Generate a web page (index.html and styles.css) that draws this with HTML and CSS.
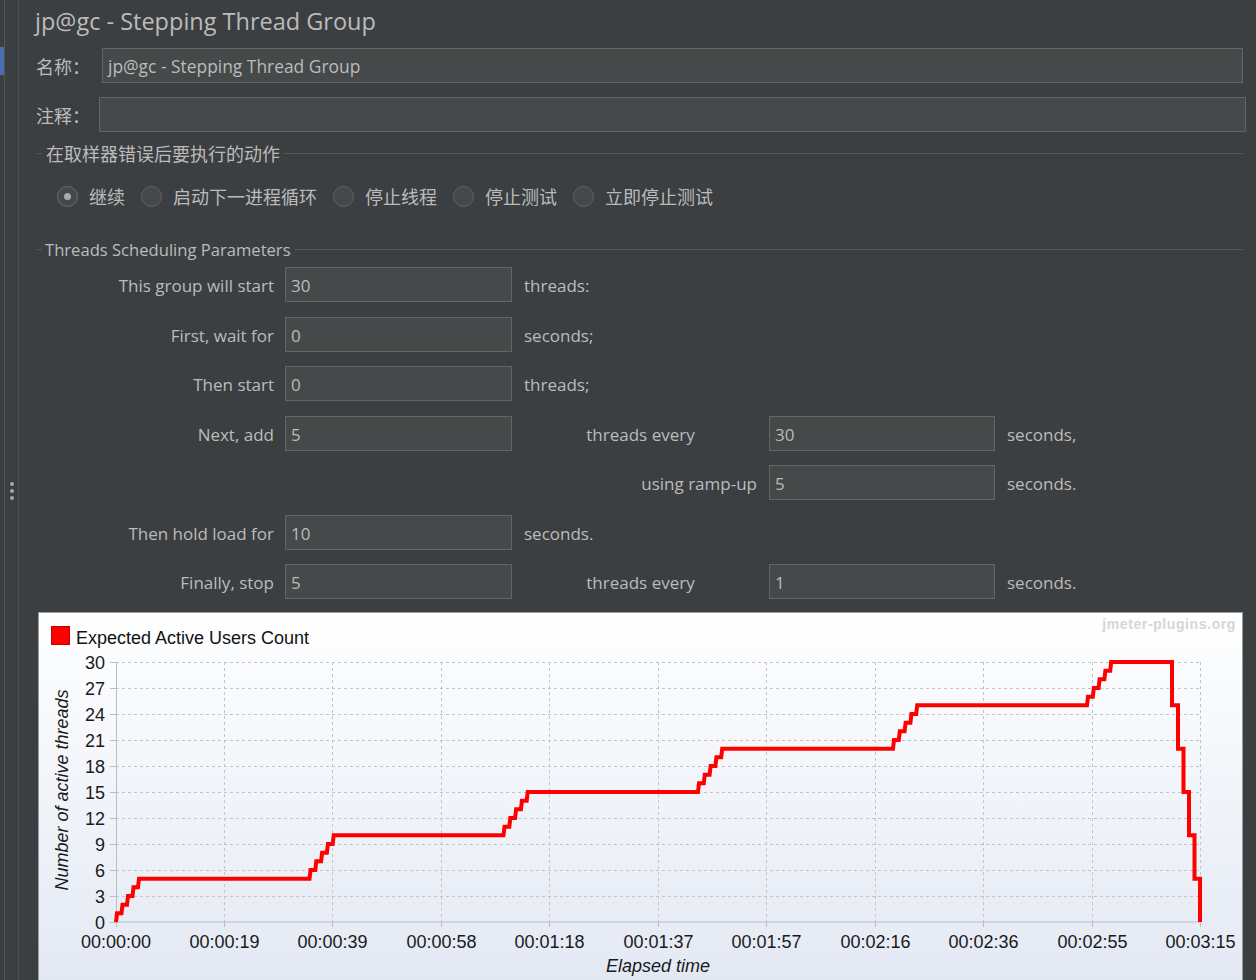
FILE: index.html
```html
<!DOCTYPE html>
<html lang="zh-CN">
<head>
<meta charset="utf-8">
<title>jp@gc - Stepping Thread Group</title>
<link rel="stylesheet" href="styles.css">
</head>
<body>
<div class="app">
  <div class="rail">
    <div class="rail-a"><div class="rail-mark"></div></div>
    <div class="rail-b"><div class="dots"><i></i><i></i><i></i></div></div>
  </div>
  <main class="panel">
    <h1 class="title">jp@gc - Stepping Thread Group</h1>
    <div class="field name-field">
      <span class="lbl cjk">名称：</span>
      <div class="input name-input">jp@gc - Stepping Thread Group</div>
    </div>
    <div class="field comment-field">
      <span class="lbl cjk">注释：</span>
      <div class="input"></div>
    </div>

    <section class="group">
      <div class="group-head"><span class="lead"></span><span class="group-title cjk">在取样器错误后要执行的动作</span><span class="rule"></span></div>
      <div class="radios">
        <span class="radio on"></span><span class="rlabel cjk">继续</span>
        <span class="radio"></span><span class="rlabel cjk">启动下一进程循环</span>
        <span class="radio"></span><span class="rlabel cjk">停止线程</span>
        <span class="radio"></span><span class="rlabel cjk">停止测试</span>
        <span class="radio"></span><span class="rlabel cjk">立即停止测试</span>
      </div>
    </section>

    <section class="group group-sched">
      <div class="group-head"><span class="lead"></span><span class="group-title latin">Threads Scheduling Parameters</span><span class="rule"></span></div>
      <div class="sched">
        <span class="lab">This group will start</span><div class="input">30</div><span class="unit wide">threads:</span>
        <span class="lab">First, wait for</span><div class="input">0</div><span class="unit wide">seconds;</span>
        <span class="lab">Then start</span><div class="input">0</div><span class="unit wide">threads;</span>
        <span class="lab">Next, add</span><div class="input">5</div><span class="mid">threads every</span><div class="input">30</div><span class="unit">seconds,</span>
        <span class="mid-r">using ramp-up</span><div class="input">5</div><span class="unit">seconds.</span>
        <span class="lab">Then hold load for</span><div class="input">10</div><span class="unit wide">seconds.</span>
        <span class="lab">Finally, stop</span><div class="input">5</div><span class="mid">threads every</span><div class="input">1</div><span class="unit">seconds.</span>
      </div>
    </section>

    <div class="chart">
      <svg width="1203" height="378" viewBox="39 613 1203 378" xmlns="http://www.w3.org/2000/svg">
        <text class="wm" x="1236" y="629">jmeter-plugins.org</text>
        <rect x="51.5" y="626.5" width="18" height="18" fill="#ff0000" stroke="#c40000"/>
        <text class="ct" x="76" y="644">Expected Active Users Count</text>

        <g class="grid">
          <line x1="116" y1="662.5" x2="1201" y2="662.5"/>
          <line x1="116" y1="688.5" x2="1201" y2="688.5"/>
          <line x1="116" y1="714.5" x2="1201" y2="714.5"/>
          <line x1="116" y1="740.5" x2="1201" y2="740.5"/>
          <line x1="116" y1="766.5" x2="1201" y2="766.5"/>
          <line x1="116" y1="792.5" x2="1201" y2="792.5"/>
          <line x1="116" y1="818.5" x2="1201" y2="818.5"/>
          <line x1="116" y1="844.5" x2="1201" y2="844.5"/>
          <line x1="116" y1="870.5" x2="1201" y2="870.5"/>
          <line x1="116" y1="896.5" x2="1201" y2="896.5"/>
          <line x1="224.5" y1="662" x2="224.5" y2="922"/>
          <line x1="332.5" y1="662" x2="332.5" y2="922"/>
          <line x1="441.5" y1="662" x2="441.5" y2="922"/>
          <line x1="549.5" y1="662" x2="549.5" y2="922"/>
          <line x1="658.5" y1="662" x2="658.5" y2="922"/>
          <line x1="766.5" y1="662" x2="766.5" y2="922"/>
          <line x1="875.5" y1="662" x2="875.5" y2="922"/>
          <line x1="983.5" y1="662" x2="983.5" y2="922"/>
          <line x1="1092.5" y1="662" x2="1092.5" y2="922"/>
          <line x1="1200.5" y1="662" x2="1200.5" y2="922"/>
        </g>

        <g class="axis">
          <line x1="116.5" y1="662" x2="116.5" y2="922"/>
          <line x1="116" y1="922" x2="1201" y2="922" stroke-width="2"/>
          <path d="M110,662.5H116M110,688.5H116M110,714.5H116M110,740.5H116M110,766.5H116M110,792.5H116M110,818.5H116M110,844.5H116M110,870.5H116M110,896.5H116M110,922.5H116"/>
          <path d="M116.5,922V927M224.5,922V927M332.5,922V927M441.5,922V927M549.5,922V927M658.5,922V927M766.5,922V927M875.5,922V927M983.5,922V927M1092.5,922V927M1200.5,922V927"/>
        </g>

        <g class="ylab">
          <text x="105" y="669">30</text>
          <text x="105" y="695">27</text>
          <text x="105" y="721">24</text>
          <text x="105" y="747">21</text>
          <text x="105" y="773">18</text>
          <text x="105" y="799">15</text>
          <text x="105" y="825">12</text>
          <text x="105" y="851">9</text>
          <text x="105" y="877">6</text>
          <text x="105" y="903">3</text>
          <text x="105" y="929">0</text>
        </g>
        <g class="xlab">
          <text x="116" y="948">00:00:00</text>
          <text x="224.5" y="948">00:00:19</text>
          <text x="332.5" y="948">00:00:39</text>
          <text x="441.5" y="948">00:00:58</text>
          <text x="549.5" y="948">00:01:18</text>
          <text x="658.5" y="948">00:01:37</text>
          <text x="766.5" y="948">00:01:57</text>
          <text x="875.5" y="948">00:02:16</text>
          <text x="983.5" y="948">00:02:36</text>
          <text x="1092.5" y="948">00:02:55</text>
          <text x="1200.5" y="948">00:03:15</text>
        </g>
        <text class="atitle" x="658" y="972" text-anchor="middle">Elapsed time</text>
        <text class="atitle" transform="translate(68,790) rotate(-90)" text-anchor="middle">Number of active threads</text>

        <path class="series" d="M116,922 L117,913.3 H121.5 L122.5,904.7 H127 L128,896 H132.5 L133.5,887.3 H138 L139,878.7
          H309.5 L310.5,870 H315.3 L316.3,861.3 H321.1 L322.1,852.7 H326.9 L327.9,844 H332.7 L333.7,835.3
          H503.5 L504.5,826.7 H509.3 L510.3,818 H515.1 L516.1,809.3 H520.9 L521.9,800.7 H526.7 L527.7,792
          H698 L699,783.3 H703.8 L704.8,774.7 H709.6 L710.6,766 H715.4 L716.4,757.3 H721.2 L722.2,748.7
          H893 L894,740 H898.8 L899.8,731.3 H904.6 L905.6,722.7 H910.4 L911.4,714 H916.2 L917.2,705.3
          H1087 L1088,696.7 H1092.8 L1093.8,688 H1098.6 L1099.6,679.3 H1104.4 L1105.4,670.7 H1110.2 L1111.2,662
          H1172 V705.3 H1178 V748.7 H1183.5 V792 H1189 V835.3 H1194.5 V878.7 H1200 V922"/>
      </svg>
    </div>
  </main>
</div>
</body>
</html>
```

FILE: styles.css
```css
* { box-sizing: border-box; }

html, body {
  margin: 0;
  height: 980px;
  overflow: hidden;
}

body {
  background: #3c3f41;
  color: #bbbbbb;
  font-family: "Open Sans", "Noto Sans CJK SC", sans-serif;
  font-size: 17px;
}

.cjk {
  font-family: "Noto Sans CJK SC", sans-serif;
  font-size: 18px;
}

.app {
  display: flex;
  height: 980px;
}

/* left tool rail */
.rail {
  display: flex;
  flex: none;
}
.rail-a {
  width: 5px;
  border-right: 1px solid #53575a;
}
.rail-mark {
  margin-top: 47px;
  width: 4px;
  height: 28px;
  background: #4b6eaf;
}
.rail-b {
  width: 14px;
  border-right: 1px solid #4c5052;
  display: flex;
  flex-direction: column;
  align-items: center;
}
.dots {
  margin-top: 482px;
  display: flex;
  flex-direction: column;
  gap: 3px;
}
.dots i {
  display: block;
  width: 4px;
  height: 4px;
  border-radius: 50%;
  background: #a8a8a8;
}

.panel {
  flex: 1;
  min-width: 0;
}

.title {
  margin: 0 0 0 16px;
  height: 48px;
  font-weight: normal;
  font-size: 23.5px;
  line-height: 42px;
  color: #bbbbbb;
}

/* name / comment rows */
.field {
  display: flex;
  align-items: center;
  height: 35px;
}
.field .lbl {
  margin-left: 17px;
  flex: none;
  padding-top: 1px;
}
.name-field { margin-right: 13px; }
.name-field .lbl { width: 66px; }
.comment-field { margin-top: 14px; margin-right: 10px; }
.comment-field .lbl { width: 63px; }

.input {
  height: 35px;
  background: #45494a;
  border: 1px solid #646464;
  padding-left: 5px;
  line-height: 33px;
  white-space: nowrap;
  color: #bbbbbb;
}
.field .input { flex: 1; }
.name-input {
  font-size: 17.4px;
  line-height: 35px;
}

/* titled groups */
.group-head {
  display: flex;
  align-items: center;
  height: 20px;
  margin: 11px 13px 0 18px;
}
.group-sched .group-head { margin-top: 32px; }
.lead {
  width: 5px;
  border-top: 1px solid #55585a;
}
.group-title {
  padding: 0 4px;
  line-height: 20px;
  white-space: nowrap;
}
.group-title.latin {
  font-size: 16.6px;
  padding: 2px 4px 0 3px;
}
.rule {
  flex: 1;
  border-top: 1px solid #55585a;
}

/* radio buttons */
.radios {
  display: flex;
  align-items: center;
  height: 22px;
  margin: 22px 0 0 38px;
}
.radio {
  width: 21px;
  height: 21px;
  flex: none;
  border-radius: 50%;
  border: 1.5px solid #646464;
  background: #43494a;
  margin-right: 11px;
  display: grid;
  place-items: center;
}
.radio.on { border-color: #6e6e6e; }
.radio.on::after {
  content: "";
  width: 7px;
  height: 7px;
  border-radius: 50%;
  background: #a9a9a9;
}
.rlabel {
  margin-right: 16px;
  line-height: 22px;
}

/* scheduling grid */
.sched {
  display: grid;
  grid-template-columns: 266px 227px 257px 226px 1fr;
  grid-auto-rows: 35px;
  row-gap: 14.5px;
  align-items: center;
  margin-top: 8px;
}
.sched > span { padding-top: 2px; }
.sched .lab {
  grid-column: 1;
  text-align: right;
  padding-right: 11px;
  white-space: nowrap;
}
.sched .input { line-height: 35px; }
.sched .unit {
  padding-left: 12px;
  white-space: nowrap;
}
.sched .unit.wide { grid-column: 3 / 6; }
.sched .mid {
  text-align: center;
  white-space: nowrap;
}
.sched .mid-r {
  grid-column: 3;
  text-align: right;
  padding-right: 12px;
  white-space: nowrap;
}

/* chart */
.chart {
  margin: 13px 0 0 19px;
  width: 1205px;
  height: 380px;
  border: 1px solid #9b9b9b;
  background: linear-gradient(#ffffff, #e2e8f3);
}
.chart svg {
  display: block;
  font-family: "Liberation Sans", Arial, sans-serif;
}
.chart .ct {
  font-size: 18px;
  fill: #111111;
}
.chart .wm {
  font-size: 14px;
  font-weight: bold;
  letter-spacing: 0.6px;
  fill: #d6d6d6;
  text-anchor: end;
}
.chart .grid line {
  stroke: #c2c4ca;
  stroke-width: 1;
  stroke-dasharray: 3 3;
}
.chart .axis line,
.chart .axis path {
  stroke: #b9bdc7;
  stroke-width: 1;
  fill: none;
}
.chart .ylab text {
  font-size: 18px;
  fill: #1a1a1a;
  text-anchor: end;
}
.chart .xlab text {
  font-size: 18px;
  fill: #1a1a1a;
  text-anchor: middle;
}
.chart .atitle {
  font-size: 18px;
  font-style: italic;
  fill: #1a1a1a;
}
.chart .series {
  fill: none;
  stroke: #ff0000;
  stroke-width: 4;
  stroke-linejoin: miter;
}
```
